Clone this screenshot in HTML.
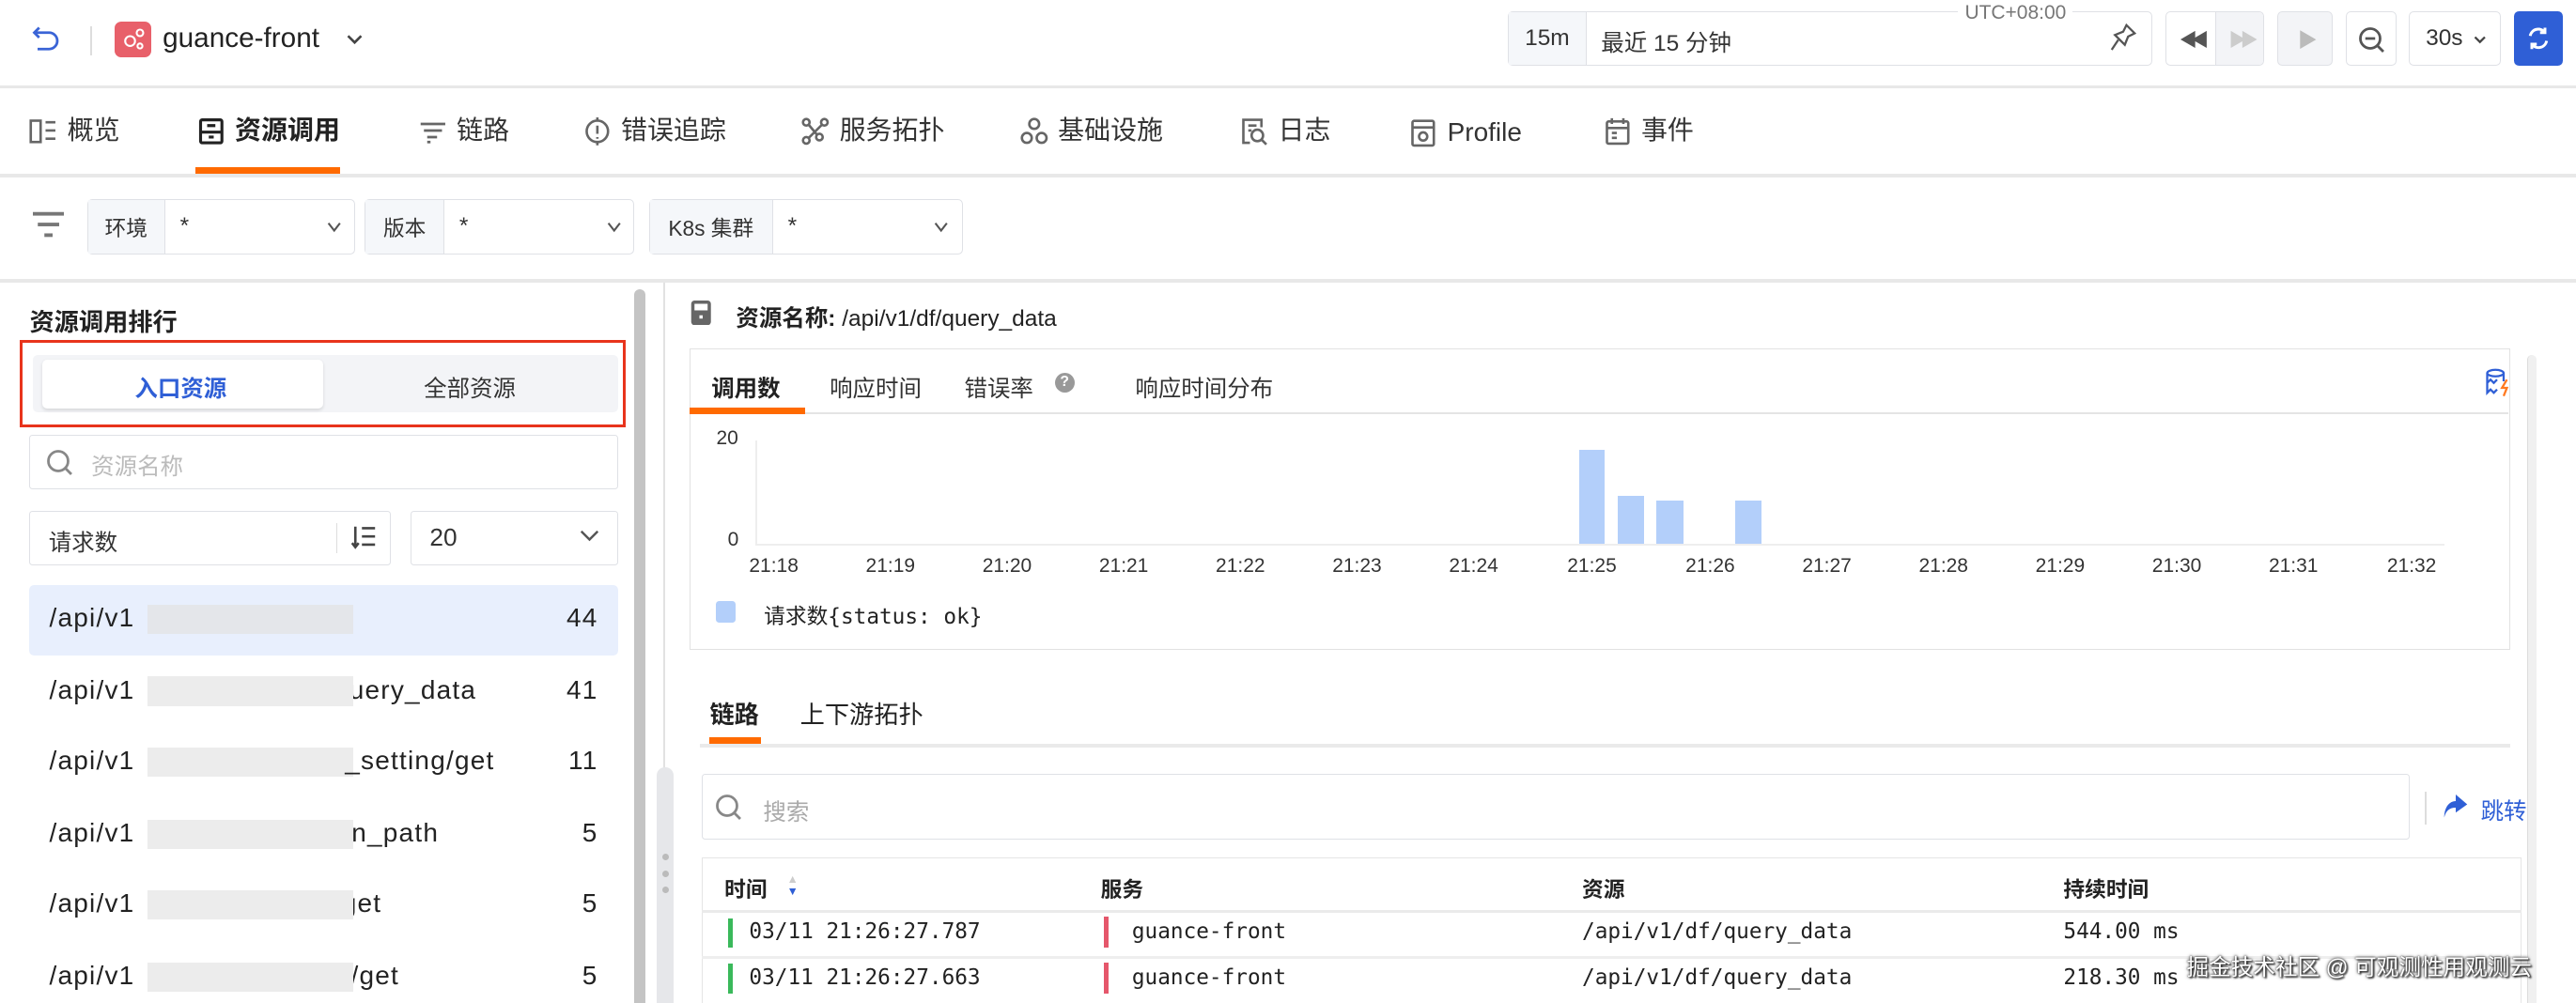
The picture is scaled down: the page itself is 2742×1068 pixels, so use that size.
<!DOCTYPE html>
<html><head><meta charset="utf-8">
<style>
*{box-sizing:border-box;margin:0;padding:0}
html,body{width:2742px;height:1068px;overflow:hidden;background:#fff}
#w{zoom:1.74872;width:1568px;height:611px;position:relative;font-family:"Liberation Sans","Noto Sans CJK SC",sans-serif;color:#333;font-size:14px}
.a{position:absolute}
.mono{font-family:"DejaVu Sans Mono","Liberation Mono","Noto Sans CJK SC",monospace}
.hl{position:absolute;height:1px;background:#e4e4e4}
.box{position:absolute;border:1px solid #dfe1e6;border-radius:3px;background:#fff}
.lab{position:absolute;top:0;bottom:0;left:0;background:#f5f7fa;border-right:1px solid #dfe1e6;display:flex;align-items:center;justify-content:center;font-size:13px}
.tab{position:absolute;top:70px;height:20px;line-height:20px;font-size:16px;color:#333;display:flex;align-items:center;gap:6px}
.row{position:absolute;left:18px;width:358px;height:43px;font-size:16px;color:#222;letter-spacing:0.7px}
.row span{position:absolute;top:11px}
.row .blur{position:absolute;left:72px;top:12px;width:125px;height:18px;background:#ececec}
.xl{position:absolute;top:338px;font-size:12px;color:#333;transform:translateX(-50%)}
.bar{position:absolute;background:#b3cffa}
.chev{position:absolute;top:13px}
</style></head><body><div id="w">

<!-- top bar -->
<svg class="a" style="left:19px;top:15px" width="18" height="18" viewBox="0 0 18 18" fill="none" stroke="#3a64d6" stroke-width="1.6"><path d="M5 2 L2 5 L5 8"/><path d="M2 5 H11 a5 5 0 0 1 0 10 H4"/></svg>
<div class="a" style="left:55px;top:16px;width:1px;height:18px;background:#ddd"></div>
<div class="a" style="left:70px;top:13px;width:22px;height:22px;border-radius:4px;background:#e8606a"></div>
<svg class="a" style="left:73px;top:16px" width="16" height="16" viewBox="0 0 16 16" fill="none" stroke="#fff" stroke-width="1.2"><circle cx="6" cy="9" r="3"/><circle cx="12" cy="4" r="2"/><circle cx="12" cy="12" r="1.5"/></svg>
<div class="a" style="left:99px;top:14px;font-size:17px;color:#222">guance-front</div>
<svg class="a" style="left:210px;top:19px" width="12" height="10" viewBox="0 0 12 10" fill="none" stroke="#444" stroke-width="1.5"><path d="M2 3 L6 7 L10 3"/></svg>

<div class="box" style="left:918px;top:7px;width:392px;height:33px">
 <div class="lab" style="width:47px;font-size:14px;color:#333">15m</div>
 <div class="a" style="left:56px;top:8px;font-size:14px;color:#333">最近 15 分钟</div>
 <svg class="a" style="left:366px;top:7px" width="16" height="18" viewBox="0 0 16 18" fill="none" stroke="#555" stroke-width="1.3"><path d="M10 1 L15 6 L11 8 L9 13 L3 7 L8 5 Z"/><path d="M5 10 L1 16"/></svg>
</div>
<div class="a" style="left:1192px;top:1px;background:#fff;padding:0 4px;font-size:12px;color:#777">UTC+08:00</div>
<div class="box" style="left:1318px;top:7px;width:60px;height:33px;overflow:hidden">
 <div class="a" style="left:30px;top:0;width:30px;height:33px;background:#f3f4f7;border-left:1px solid #dfe1e6"></div>
 <div class="a" style="left:8px;top:8px;font-size:11px;color:#555;letter-spacing:-4px">◀◀</div>
 <div class="a" style="left:38px;top:8px;font-size:11px;color:#ccc;letter-spacing:-4px">▶▶</div>
</div>
<div class="box" style="left:1386px;top:7px;width:34px;height:33px;background:#f3f4f7"><div class="a" style="left:12px;top:8px;font-size:12px;color:#bbb">▶</div></div>
<div class="box" style="left:1428px;top:7px;width:31px;height:33px">
<svg class="a" style="left:6px;top:8px" width="18" height="18" viewBox="0 0 18 18" fill="none" stroke="#555" stroke-width="1.6"><circle cx="8" cy="8" r="6"/><path d="M5 8 H11 M12.5 12.5 L16 16"/></svg></div>
<div class="box" style="left:1466px;top:7px;width:56px;height:33px"><div class="a" style="left:10px;top:8px;font-size:14px">30s</div>
<svg class="a" style="left:38px;top:13px" width="10" height="8" viewBox="0 0 10 8" fill="none" stroke="#444" stroke-width="1.3"><path d="M2 2 L5 5 L8 2"/></svg></div>
<div class="a" style="left:1530px;top:7px;width:30px;height:33px;background:#2f5fd6;border-radius:3px"></div>
<svg class="a" style="left:1537px;top:15px" width="16" height="17" viewBox="0 0 16 17" fill="none" stroke="#fff" stroke-width="1.7"><path d="M3 7 a5 5 0 0 1 9-2 M13 10 a5 5 0 0 1-9 2"/><path d="M12 2 V5 H9 M4 15 V12 H7"/></svg>
<div class="hl" style="left:0;top:52px;width:1568px;height:2px;background:#e8e8e8"></div>

<!-- nav tabs -->
<div class="tab" style="left:18px"><svg width="17" height="17" viewBox="0 0 17 17" fill="none" stroke="#666" stroke-width="1.5"><rect x="1" y="2" width="6" height="13"/><path d="M10 3 H16 M10 8 H16 M10 13 H16"/></svg>概览</div>
<div class="tab" style="left:120px;font-weight:bold;color:#222"><svg width="17" height="17" viewBox="0 0 17 17" fill="none" stroke="#222" stroke-width="1.8"><rect x="2" y="1.5" width="13" height="14" rx="1"/><path d="M2 9 H15 M6 5 H11 M7 12 H10"/></svg>资源调用</div>
<div class="a" style="left:119px;top:102px;width:88px;height:4px;background:#ff6a00"></div>
<div class="tab" style="left:255px"><svg width="17" height="17" viewBox="0 0 17 17" fill="none" stroke="#666" stroke-width="1.6"><path d="M1 4 H16 M3 8 H14 M5 12 H11 M5 15 H7"/></svg>链路</div>
<div class="tab" style="left:355px"><svg width="17" height="17" viewBox="0 0 17 17" fill="none" stroke="#666" stroke-width="1.5"><circle cx="8.5" cy="8.5" r="6.5"/><path d="M8.5 5 V10 M8.5 12 V13 M8.5 0 V2 M8.5 15 V17"/></svg>错误追踪</div>
<div class="tab" style="left:488px"><svg width="17" height="17" viewBox="0 0 17 17" fill="none" stroke="#666" stroke-width="1.5"><circle cx="3" cy="3" r="2"/><circle cx="14" cy="3" r="2"/><circle cx="3" cy="14" r="2"/><circle cx="11" cy="12" r="2"/><path d="M4.5 4.5 L9.5 10.5 M12.5 4.5 L4.5 12.5"/></svg>服务拓扑</div>
<div class="tab" style="left:621px"><svg width="17" height="17" viewBox="0 0 17 17" fill="none" stroke="#666" stroke-width="1.5"><circle cx="8.5" cy="4" r="3"/><circle cx="4" cy="12.5" r="3"/><circle cx="13" cy="12.5" r="3"/></svg>基础设施</div>
<div class="tab" style="left:755px"><svg width="17" height="17" viewBox="0 0 17 17" fill="none" stroke="#666" stroke-width="1.5"><path d="M13 6 V1.5 H2 V15.5 H6"/><circle cx="10.5" cy="11" r="3.5"/><path d="M13 13.5 L16 16.5 M5 5 H10 M5 8 H7"/></svg>日志</div>
<div class="tab" style="left:858px;top:71px"><svg width="17" height="17" viewBox="0 0 17 17" fill="none" stroke="#666" stroke-width="1.5"><rect x="2" y="1" width="13" height="15" rx="1"/><path d="M2 5 H15"/><circle cx="8.5" cy="10.5" r="2.5"/></svg>Profile</div>
<div class="tab" style="left:976px"><svg width="17" height="17" viewBox="0 0 17 17" fill="none" stroke="#666" stroke-width="1.5"><rect x="2" y="2.5" width="13" height="13.5" rx="1"/><path d="M5 0.5 V4 M12 0.5 V4 M2 6.5 H15 M5 9.5 H8 M5 12.5 H8"/></svg>事件</div>
<div class="hl" style="left:0;top:106px;width:1568px;height:2px;background:#e8e8e8"></div>

<!-- filters -->
<svg class="a" style="left:20px;top:128px" width="19" height="17" viewBox="0 0 19 17" fill="#777"><rect x="0" y="1" width="19" height="2.2"/><rect x="3" y="7.5" width="13" height="2.2"/><rect x="7" y="14" width="5" height="2.2"/></svg>
<div class="box" style="left:53px;top:121px;width:163px;height:34px"><div class="lab" style="width:47px">环境</div><div class="a" style="left:56px;top:8px">*</div><svg class="chev" style="left:145px" width="10" height="8" viewBox="0 0 10 8" fill="none" stroke="#555" stroke-width="1.2"><path d="M1.5 1.5 L5 6 L8.5 1.5"/></svg></div>
<div class="box" style="left:222px;top:121px;width:164px;height:34px"><div class="lab" style="width:48px">版本</div><div class="a" style="left:57px;top:8px">*</div><svg class="chev" style="left:146px" width="10" height="8" viewBox="0 0 10 8" fill="none" stroke="#555" stroke-width="1.2"><path d="M1.5 1.5 L5 6 L8.5 1.5"/></svg></div>
<div class="box" style="left:395px;top:121px;width:191px;height:34px"><div class="lab" style="width:75px">K8s 集群</div><div class="a" style="left:84px;top:8px">*</div><svg class="chev" style="left:172px" width="10" height="8" viewBox="0 0 10 8" fill="none" stroke="#555" stroke-width="1.2"><path d="M1.5 1.5 L5 6 L8.5 1.5"/></svg></div>
<div class="hl" style="left:0;top:170px;width:1568px;height:2px;background:#e8e8e8"></div>

<!-- left panel -->
<div class="a" style="left:18px;top:184px;font-size:15px;font-weight:bold;color:#222">资源调用排行</div>
<div class="a" style="left:12px;top:207px;width:369px;height:53px;border:2px solid #e8341c"></div>
<div class="a" style="left:20px;top:216px;width:356px;height:35px;background:#f3f4f7;border-radius:3px"></div>
<div class="a" style="left:26px;top:219px;width:171px;height:30px;background:#fff;border-radius:3px;box-shadow:0 1px 2px rgba(0,0,0,.12)"></div>
<div class="a" style="left:82px;top:226px;font-size:14px;color:#2f5fd6;font-weight:bold">入口资源</div>
<div class="a" style="left:258px;top:226px;font-size:14px;color:#333">全部资源</div>
<div class="box" style="left:18px;top:265px;width:358px;height:33px;border-radius:2px">
<svg class="a" style="left:9px;top:7px" width="18" height="18" viewBox="0 0 18 18" fill="none" stroke="#888" stroke-width="1.6"><circle cx="8" cy="8" r="6"/><path d="M12.5 12.5 L16 16"/></svg>
<div class="a" style="left:37px;top:8px;color:#bbb;font-size:14px">资源名称</div></div>
<div class="box" style="left:18px;top:311px;width:220px;height:33px;border-radius:2px">
<div class="a" style="left:11px;top:8px;font-size:14px">请求数</div>
<div class="a" style="left:186px;top:7px;width:1px;height:18px;background:#ddd"></div>
<svg class="a" style="left:195px;top:8px" width="16" height="15" viewBox="0 0 16 15" fill="none" stroke="#444" stroke-width="1.5"><path d="M3 1 V13 M1 11 L3 13.5 L5 11 M7 2 H15 M7 7 H15 M7 12 H15"/></svg></div>
<div class="box" style="left:250px;top:311px;width:126px;height:33px;border-radius:2px">
<div class="a" style="left:11px;top:7px;font-size:15px">20</div>
<svg class="a" style="left:102px;top:11px" width="12" height="8" viewBox="0 0 12 8" fill="none" stroke="#555" stroke-width="1.4"><path d="M1 1 L6 6 L11 1"/></svg></div>

<div class="row" style="top:356px;background:#e8effd;border-radius:3px"><span style="left:12px">/api/v1</span><div class="blur" style="background:#e4e6ea"></div><span style="right:12px">44</span></div>
<div class="row" style="top:400px"><span style="left:12px">/api/v1</span><span style="left:185px">query_data</span><div class="blur"></div><span style="right:12px">41</span></div>
<div class="row" style="top:443px"><span style="left:12px">/api/v1</span><div class="blur"></div><span style="left:192px">_setting/get</span><span style="right:12px">11</span></div>
<div class="row" style="top:487px"><span style="left:12px">/api/v1</span><div class="blur"></div><span style="left:196px">n_path</span><span style="right:12px">5</span></div>
<div class="row" style="top:530px"><span style="left:12px">/api/v1</span><span style="left:190px">get</span><div class="blur"></div><span style="right:12px">5</span></div>
<div class="row" style="top:574px"><span style="left:12px">/api/v1</span><span style="left:186px">d/get</span><div class="blur"></div><span style="right:12px">5</span></div>

<div class="a" style="left:386px;top:176px;width:7px;height:440px;background:#c4c4c4;border-radius:4px"></div>
<div class="a" style="left:404px;top:172px;width:1px;height:440px;background:#e2e2e2"></div>
<div class="a" style="left:400px;top:467px;width:10px;height:150px;background:#e6e7ea;border-radius:5px"></div>
<div class="a" style="left:403px;top:520px;width:4px;height:4px;border-radius:2px;background:#bbb"></div>
<div class="a" style="left:403px;top:530px;width:4px;height:4px;border-radius:2px;background:#bbb"></div>
<div class="a" style="left:403px;top:540px;width:4px;height:4px;border-radius:2px;background:#bbb"></div>

<!-- right header -->
<svg class="a" style="left:420px;top:183px" width="14" height="15" viewBox="0 0 14 15"><rect x="1" y="0" width="12" height="15" rx="2" fill="#666"/><rect x="3" y="2" width="8" height="4" fill="#fff"/><rect x="6" y="9" width="2" height="2" fill="#fff"/></svg>
<div class="a" style="left:448px;top:183px;font-size:14px;color:#222"><b>资源名称:</b> /api/v1/df/query_data</div>

<!-- chart card -->
<div class="a" style="left:420px;top:212px;width:1108px;height:184px;border:1px solid #e2e2e2"></div>
<div class="hl" style="left:421px;top:251px;width:1106px"></div>
<div class="a" style="left:433px;top:226px;font-size:14px;font-weight:bold;color:#222">调用数</div>
<div class="a" style="left:505px;top:226px;font-size:14px">响应时间</div>
<div class="a" style="left:587px;top:226px;font-size:14px">错误率</div>
<div class="a" style="left:642px;top:227px;width:12px;height:12px;border-radius:6px;background:#999;color:#fff;font-size:9px;text-align:center;line-height:12px;font-weight:bold">?</div>
<div class="a" style="left:691px;top:226px;font-size:14px">响应时间分布</div>
<div class="a" style="left:420px;top:248px;width:70px;height:4px;background:#ff6a00"></div>
<svg class="a" style="left:1512px;top:224px" width="18" height="18" viewBox="0 0 18 18" fill="none" stroke="#2f5fd6" stroke-width="1.3"><ellipse cx="7" cy="3" rx="5" ry="2"/><path d="M2 3 V15 L4 13 L6 15 L8 13 M12 3 V8 M2 9 L4 7 L6 9 L8 7"/><path d="M14 7 L11 12 H14 L12 17" stroke="#ff7a21"/></svg>

<div class="a" style="left:436px;top:260px;font-size:12px">20</div>
<div class="a" style="left:443px;top:322px;font-size:12px">0</div>
<div class="a" style="left:460px;top:268px;width:1px;height:64px;background:#eee"></div>
<div class="a" style="left:460px;top:331px;width:1028px;height:1px;background:#eee"></div>
<div class="bar" style="left:961px;width:16px;top:274px;height:57px"></div>
<div class="bar" style="left:985px;width:16px;top:302px;height:29px"></div>
<div class="bar" style="left:1008px;width:17px;top:305px;height:26px"></div>
<div class="bar" style="left:1056px;width:16px;top:305px;height:26px"></div>
<div class="xl" style="left:471px">21:18</div><div class="xl" style="left:542px">21:19</div><div class="xl" style="left:613px">21:20</div><div class="xl" style="left:684px">21:21</div><div class="xl" style="left:755px">21:22</div><div class="xl" style="left:826px">21:23</div><div class="xl" style="left:897px">21:24</div><div class="xl" style="left:969px">21:25</div><div class="xl" style="left:1041px">21:26</div><div class="xl" style="left:1112px">21:27</div><div class="xl" style="left:1183px">21:28</div><div class="xl" style="left:1254px">21:29</div><div class="xl" style="left:1325px">21:30</div><div class="xl" style="left:1396px">21:31</div><div class="xl" style="left:1468px">21:32</div>
<div class="a" style="left:436px;top:366px;width:12px;height:13px;background:#b3cffa;border-radius:2px"></div>
<div class="a mono" style="left:465px;top:365px;font-size:13px;color:#222">请求数{status: ok}</div>

<div class="a" style="left:1538px;top:216px;width:6px;height:400px;background:#f0f0f0;border-left:1px solid #ddd;border-radius:3px"></div>

<!-- trace tabs -->
<div class="a" style="left:432px;top:423px;font-size:15px;font-weight:bold;color:#222">链路</div>
<div class="a" style="left:487px;top:423px;font-size:15px;color:#222">上下游拓扑</div>
<div class="hl" style="left:426px;top:453px;width:1102px;height:2px;background:#eaeaea"></div>
<div class="a" style="left:432px;top:449px;width:31px;height:4px;background:#ff6a00"></div>

<div class="box" style="left:427px;top:471px;width:1040px;height:40px;border-radius:2px">
<svg class="a" style="left:7px;top:11px" width="18" height="18" viewBox="0 0 18 18" fill="none" stroke="#888" stroke-width="1.6"><circle cx="8" cy="8" r="6"/><path d="M12.5 12.5 L16 16"/></svg>
<div class="a" style="left:37px;top:12px;color:#aaa;font-size:14px">搜索</div></div>
<div class="a" style="left:1476px;top:482px;width:1px;height:20px;background:#ddd"></div>
<svg class="a" style="left:1487px;top:484px" width="15" height="14" viewBox="0 0 15 14" fill="#2f5fd6"><path d="M8 0 L15 6 L8 11 V8 C4 8 2 10 1 14 C1 8 4 4 8 4 Z"/></svg>
<div class="a" style="left:1510px;top:483px;font-size:14px;color:#2f5fd6">跳转</div>

<!-- table -->
<div class="a" style="left:427px;top:522px;width:1108px;height:95px;border:1px solid #e5e5e5;border-bottom:none"></div>
<div class="hl" style="left:427px;top:554px;width:1108px;height:2px;background:#eaeaea"></div>
<div class="hl" style="left:427px;top:582px;width:1108px;height:2px;background:#eee"></div>
<div class="a" style="left:441px;top:531px;font-size:13px;font-weight:bold;color:#222">时间</div>
<div class="a" style="left:479px;top:532px;font-size:7px;line-height:7px;color:#ccc">▲<br><span style="color:#2f5fd6">▼</span></div>
<div class="a" style="left:670px;top:531px;font-size:13px;font-weight:bold;color:#222">服务</div>
<div class="a" style="left:963px;top:531px;font-size:13px;font-weight:bold;color:#222">资源</div>
<div class="a" style="left:1256px;top:531px;font-size:13px;font-weight:bold;color:#222">持续时间</div>

<div class="a" style="left:443px;top:559px;width:3px;height:18px;background:#3ab95b"></div>
<div class="a" style="left:672px;top:558px;width:3px;height:19px;background:#e5576b"></div>
<div class="a mono" style="left:456px;top:560px;font-size:13px;color:#222">03/11 21:26:27.787</div>
<div class="a mono" style="left:689px;top:560px;font-size:13px;color:#222">guance-front</div>
<div class="a mono" style="left:963px;top:560px;font-size:13px;color:#222">/api/v1/df/query_data</div>
<div class="a mono" style="left:1256px;top:560px;font-size:13px;color:#222">544.00 ms</div>

<div class="a" style="left:443px;top:587px;width:3px;height:18px;background:#3ab95b"></div>
<div class="a" style="left:672px;top:586px;width:3px;height:19px;background:#e5576b"></div>
<div class="a mono" style="left:456px;top:588px;font-size:13px;color:#222">03/11 21:26:27.663</div>
<div class="a mono" style="left:689px;top:588px;font-size:13px;color:#222">guance-front</div>
<div class="a mono" style="left:963px;top:588px;font-size:13px;color:#222">/api/v1/df/query_data</div>
<div class="a mono" style="left:1256px;top:588px;font-size:13px;color:#222">218.30 ms</div>

<div class="a" style="left:1331px;top:578px;font-size:13.5px;color:#fff;text-shadow:0 0 1px #333,0 0 2px #333,1px 1px 1px #222">掘金技术社区 @ 可观测性用观测云</div>
</div></body></html>
